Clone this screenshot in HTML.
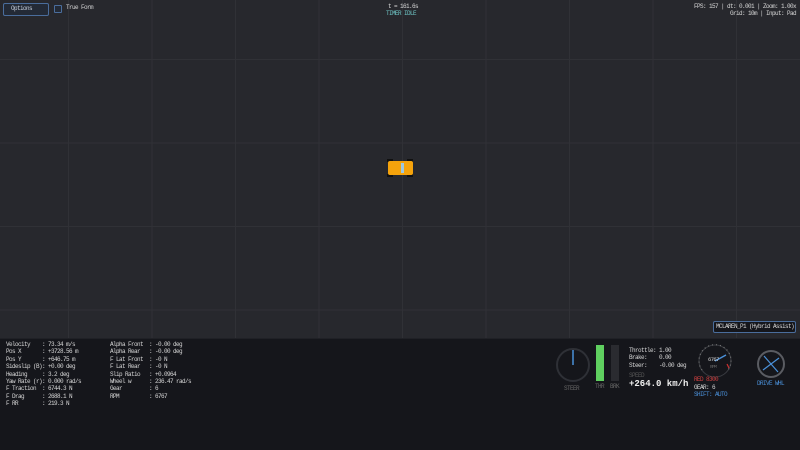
<!DOCTYPE html>
<html><head><meta charset="utf-8"><style>
*{margin:0;padding:0;box-sizing:border-box}
body{width:800px;height:450px;overflow:hidden;background:#27282d;font-family:"Liberation Mono",monospace;color:#d8d8d8;position:relative}
.t{position:absolute;font-size:6px;letter-spacing:-0.6px;white-space:pre;line-height:7.4px}
#grid{position:absolute;left:0;top:0;width:800px;height:338px;
background-image:linear-gradient(to right,#303136 1px,transparent 1px),linear-gradient(to bottom,#303136 1px,transparent 1px);
background-size:83.5px 83.5px;background-position:68px 59px}
#panel{position:absolute;left:0;top:338px;width:800px;height:112px;background:#15161b;border-top:1px solid #202126}
</style></head><body>
<div id="grid"></div>
<div style="position:absolute;left:3px;top:3px;width:46px;height:13px;border:1px solid #4a6d9c;border-radius:2px;background:#232a36"></div>
<div class="t" style="left:11px;top:5px;color:#c8d0dc">Options</div>
<div style="position:absolute;left:54px;top:5px;width:8px;height:8px;border:1px solid #4a6d9c;border-radius:1px;background:#232a36"></div>
<div class="t" style="left:66px;top:4px">True Form</div>
<div class="t" style="left:388px;top:3px">t = 161.6s</div>
<div class="t" style="left:386px;top:10px;color:#6fc6c6">TIMER IDLE</div>
<div class="t" style="right:4px;top:3px;text-align:right">FPS: 157 | dt: 0.001 | Zoom: 1.00x
Grid: 10m | Input: Pad</div>
<svg style="position:absolute;left:385px;top:158px" width="30" height="20" viewBox="0 0 30 20">
<rect x="2" y="1" width="6" height="3" fill="#111"/><rect x="2" y="16" width="6" height="3" fill="#111"/>
<rect x="22" y="1" width="6" height="3" fill="#111"/><rect x="22" y="16" width="6" height="3" fill="#111"/>
<rect x="3" y="3" width="25" height="14" rx="2" fill="#f5a30c"/>
<rect x="16" y="5" width="3" height="10" fill="#9ec8e0"/>
</svg>
<div style="position:absolute;left:713px;top:321px;width:83px;height:12px;border:1px solid #4a6d9c;border-radius:2px;background:#15161b"></div>
<div class="t" style="left:716px;top:323px">MCLAREN_P1 (Hybrid Assist)</div>
<div id="panel"></div>
<div class="t" style="left:6px;top:341px">Velocity    : 73.34 m/s
Pos X       : +3728.56 m
Pos Y       : +646.75 m
Sideslip (B): +0.00 deg
Heading     : 3.2 deg
Yaw Rate (r): 0.000 rad/s
F Traction  : 6744.3 N
F Drag      : 2688.1 N
F RR        : 219.3 N</div>
<div class="t" style="left:110px;top:341px">Alpha Front  : -0.00 deg
Alpha Rear   : -0.00 deg
F Lat Front  : -0 N
F Lat Rear   : -0 N
Slip Ratio   : +0.0964
Wheel w      : 236.47 rad/s
Gear         : 6
RPM          : 6767</div>
<svg style="position:absolute;left:550px;top:340px" width="250" height="65">
<circle cx="23" cy="25" r="16" fill="none" stroke="#2e3036" stroke-width="2"/>
<line x1="23" y1="25" x2="23" y2="10" stroke="#4a90d9" stroke-width="1.5"/>
<rect x="46" y="5" width="8" height="36" fill="#5fcf5f"/>
<rect x="61" y="5" width="8" height="36" fill="#2a2b30"/>
<circle cx="165" cy="21" r="16" fill="none" stroke="#3a3c42" stroke-width="1"/>
<path d="M152 30 A16 16 0 1 1 178 30" fill="none" stroke="#777" stroke-width="1.2" stroke-dasharray="1 3"/>
<path d="M177 24 L179 28" stroke="#d03030" stroke-width="1.2"/>
<line x1="165" y1="21" x2="176" y2="15" stroke="#4a90d9" stroke-width="1.5"/>
<circle cx="221" cy="24" r="13" fill="none" stroke="#5a5c62" stroke-width="2"/>
<line x1="214" y1="16" x2="228" y2="32" stroke="#4a90d9" stroke-width="1.2"/>
<line x1="229" y1="18" x2="213" y2="30" stroke="#4a90d9" stroke-width="1.2"/>
</svg>
<div class="t" style="left:564px;top:385px;color:#666">STEER</div>
<div class="t" style="left:595px;top:383px;color:#666">THR</div>
<div class="t" style="left:610px;top:383px;color:#666">BRK</div>
<div class="t" style="left:629px;top:347px">Throttle: 1.00
Brake:    0.00
Steer:    -0.00 deg</div>
<div class="t" style="left:629px;top:372px;color:#555">SPEED</div>
<div style="position:absolute;left:629px;top:379px;font-size:9px;font-weight:bold;color:#f0f0f0;white-space:pre">+264.0 km/h</div>
<div class="t" style="left:708px;top:356px;font-size:5.5px">6767</div>
<div class="t" style="left:710px;top:364px;color:#666;font-size:4.5px">RPM</div>
<div class="t" style="left:694px;top:376px;color:#d04040">RED 8300</div>
<div class="t" style="left:694px;top:384px">GEAR: 6</div>
<div class="t" style="left:694px;top:391px;color:#4a90d9">SHIFT: AUTO</div>
<div class="t" style="left:757px;top:380px;color:#4a90d9">DRIVE WHL</div>
</body></html>
